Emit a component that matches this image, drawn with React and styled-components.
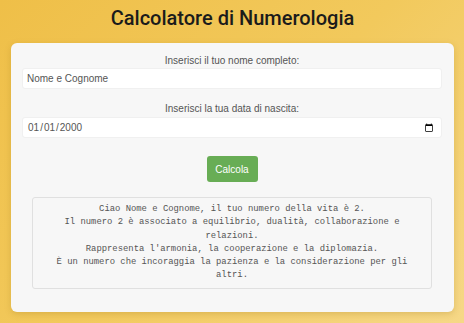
import React, { useState } from "react";
import styled, { createGlobalStyle } from "styled-components";

const Global = createGlobalStyle`
  html, body { margin: 0; padding: 0; }
  body {
    min-height: 100vh;
    background: linear-gradient(135deg, #efbf48 0%, #f2c95c 50%, #f6d887 100%);
    font-family: "Liberation Sans", Arial, sans-serif;
  }
`;

const Page = styled.div`
  display: flex;
  flex-direction: column;
  align-items: center;
  padding: 0 10px 12px 11px;
`;

const Title = styled.h1`
  margin: 6px 0 0;
  height: 37px;
  font-family: Roboto, "Liberation Sans", sans-serif;
  font-weight: 500;
  font-size: 20px;
  line-height: 24px;
  color: #1b1b1b;
`;

const Card = styled.div`
  box-sizing: border-box;
  width: 100%;
  background: #f7f7f7;
  border-radius: 6px;
  box-shadow: 0 2px 6px rgba(150, 110, 20, 0.25);
  padding: 12px 12px 23px 11px;
  display: flex;
  flex-direction: column;
  align-items: center;
`;

const Field = styled.div`
  width: 100%;
  display: flex;
  flex-direction: column;
  align-items: center;
  margin-bottom: ${(p) => p.$gap}px;
`;

const Label = styled.label`
  font-size: 10px;
  line-height: 12px;
  color: #555;
  margin-bottom: ${(p) => p.$mb}px;
`;

const Input = styled.input`
  box-sizing: border-box;
  width: 100%;
  height: 21px;
  border: 1px solid #f0f0f0;
  border-radius: 3px;
  background: #fff;
  padding: 0 3px 0 4px;
  font-family: "Liberation Sans", Arial, sans-serif;
  font-size: 10px;
  color: #555;
  outline: none;
  &::-webkit-calendar-picker-indicator {
    width: 10px;
    height: 10px;
    margin-right: 2px;
  }
`;

const Button = styled.button`
  width: 51px;
  height: 26px;
  border: none;
  border-radius: 3px;
  background: #68ad55;
  color: #fff;
  font-family: "Liberation Sans", Arial, sans-serif;
  font-size: 10px;
  margin-bottom: 15px;
  cursor: pointer;
`;

const Result = styled.div`
  box-sizing: border-box;
  width: 400px;
  border: 1px solid #e0e0e0;
  border-radius: 3px;
  background: #f7f7f7;
  padding: 5px 10px 5px;
  font-family: "Liberation Mono", "Courier New", monospace;
  font-size: 8.87px;
  line-height: 13.3px;
  color: #555;
  text-align: center;
`;

const Line = styled.div``;

export default function App() {
  const [name, setName] = useState("Nome e Cognome");
  const [date, setDate] = useState("2000-01-01");
  return (
    <>
      <Global />
      <Page>
        <Title>Calcolatore di Numerologia</Title>
        <Card>
          <Field $gap={14}>
            <Label $mb={1}>Inserisci il tuo nome completo:</Label>
            <Input value={name} onChange={(e) => setName(e.target.value)} />
          </Field>
          <Field $gap={18}>
            <Label $mb={2}>Inserisci la tua data di nascita:</Label>
            <Input type="date" value={date} onChange={(e) => setDate(e.target.value)} />
          </Field>
          <Button>Calcola</Button>
          <Result>
            <Line>Ciao Nome e Cognome, il tuo numero della vita è 2.</Line>
            <Line>Il numero 2 è associato a equilibrio, dualità, collaborazione e relazioni.</Line>
            <Line>Rappresenta l'armonia, la cooperazione e la diplomazia.</Line>
            <Line>È un numero che incoraggia la pazienza e la considerazione per gli altri.</Line>
          </Result>
        </Card>
      </Page>
    </>
  );
}
